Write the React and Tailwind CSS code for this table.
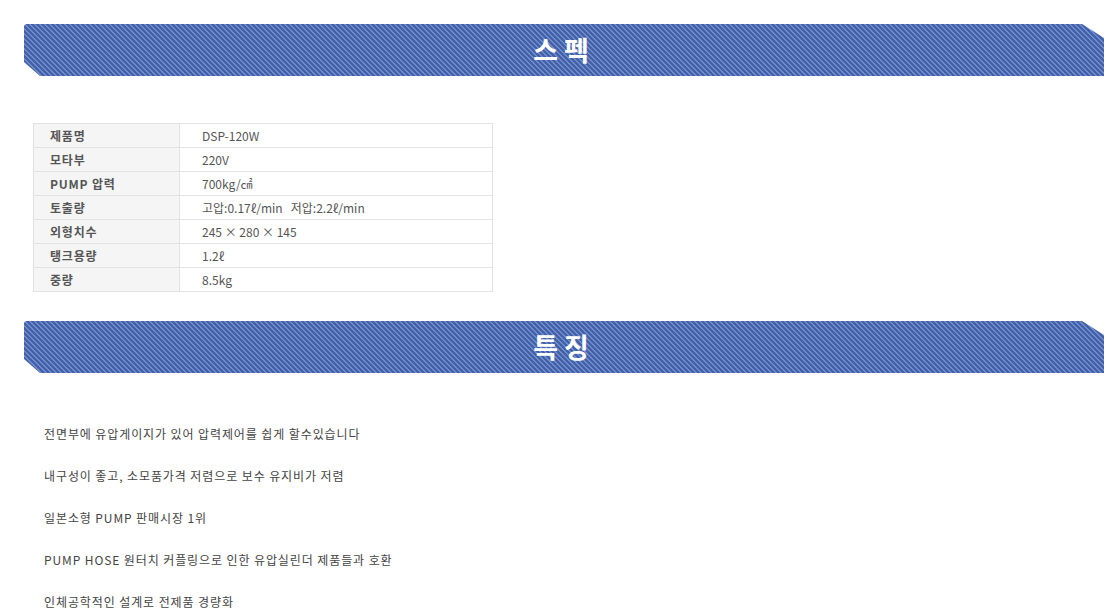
import React from 'react'

const specs = [
  ['제품명', 'DSP-120W'],
  ['모타부', '220V'],
  ['PUMP 압력', '700kg/㎠'],
  ['토출량', '고압:0.17ℓ/min\u00a0\u00a0 저압:2.2ℓ/min'],
  ['외형치수', '245 × 280 × 145'],
  ['탱크용량', '1.2ℓ'],
  ['중량', '8.5kg'],
]

const features = [
  '전면부에 유압게이지가 있어 압력제어를 쉽게 할수있습니다',
  '내구성이 좋고, 소모품가격 저렴으로 보수 유지비가 저렴',
  '일본소형 PUMP 판매시장 1위',
  'PUMP HOSE 원터치 커플링으로 인한 유압실린더 제품들과 호환',
  '인체공학적인 설계로 전제품 경량화',
]

function Banner({ title }) {
  return (
    <div className="flex h-[52px] w-[1080px] items-center justify-center rounded-tl-[3px] bg-[#4261aa] bg-[linear-gradient(45deg,#6f8bc8_0%,#6f8bc8_18%,transparent_18%,transparent_50%,#6f8bc8_50%,#6f8bc8_68%,transparent_68%,transparent_100%)] bg-size-[5px_5px] [clip-path:polygon(0_0,1058px_0,1080px_14px,1080px_100%,16px_100%,0_38px)]">
      <h2 className="text-[27px] font-bold tracking-[6px] text-white [font-family:'Noto_Sans_CJK_KR',sans-serif]">
        {title}
      </h2>
    </div>
  )
}

export default function App() {
  return (
    <div className="min-h-[613px] bg-white pl-6 pt-6 text-[12px] [font-family:'Noto_Sans_CJK_KR','Liberation_Sans',sans-serif]">
      <Banner title="스펙" />

      <table className="ml-[9px] mt-[47px] w-[460px] border-collapse">
        <tbody>
          {specs.map(([label, value]) => (
            <tr key={label} className="h-6">
              <th className="w-[146px] border border-[#e2e2e2] bg-[#f5f5f5] pl-[16px] text-left text-[12px] font-bold tracking-[0.8px] text-[#555]">
                {label}
              </th>
              <td className="border border-[#e2e2e2] pl-[22px] text-[12px] text-[#555]">{value}</td>
            </tr>
          ))}
        </tbody>
      </table>

      <div className="mt-[29px]">
        <Banner title="특징" />
      </div>

      <div className="mt-[40px] pl-5">
        {features.map((f) => (
          <p key={f} className="flex h-[42px] items-center tracking-[0.9px] text-[#444]">
            {f}
          </p>
        ))}
      </div>
    </div>
  )
}
